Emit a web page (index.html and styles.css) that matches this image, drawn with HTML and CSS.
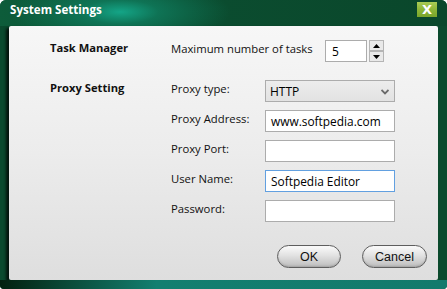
FILE: index.html
```html
<!DOCTYPE html>
<html>
<head>
<meta charset="utf-8">
<link rel="stylesheet" href="styles.css">
</head>
<body>
<div class="window">
  <div class="titlebar">
    <span class="title">System Settings</span>
    <span class="close">X</span>
  </div>
  <div class="panel">
    <div class="section">
      <div class="sec-label">Task Manager</div>
      <div class="sec-body">
        <div class="row">
          <span class="lbl wide">Maximum number of tasks</span>
          <div class="spin-input">5</div>
          <div class="spin-btns">
            <div class="spin-btn"><svg width="7" height="4" viewBox="0 0 7 4"><path d="M0 4 L3.5 0 L7 4 Z" fill="#000"/></svg></div>
            <div class="spin-btn"><svg width="7" height="4" viewBox="0 0 7 4"><path d="M0 0 L3.5 4 L7 0 Z" fill="#000"/></svg></div>
          </div>
        </div>
      </div>
    </div>
    <div class="section proxy">
      <div class="sec-label">Proxy Setting</div>
      <div class="sec-body">
        <div class="row">
          <span class="lbl">Proxy type:</span>
          <div class="select"><span>HTTP</span>
            <svg class="chev" width="8" height="6" viewBox="0 0 8 6"><path d="M0.5 1 L4 4.5 L7.5 1" fill="none" stroke="#6b6b6b" stroke-width="1.8"/></svg>
          </div>
        </div>
        <div class="row">
          <span class="lbl">Proxy Address:</span>
          <div class="input">www.softpedia.com</div>
        </div>
        <div class="row">
          <span class="lbl">Proxy Port:</span>
          <div class="input"></div>
        </div>
        <div class="row">
          <span class="lbl">User Name:</span>
          <div class="input focus">Softpedia Editor</div>
        </div>
        <div class="row">
          <span class="lbl">Password:</span>
          <div class="input"></div>
        </div>
      </div>
    </div>
    <div class="buttons">
      <button class="btn ok">OK</button>
      <button class="btn cancel">Cancel</button>
    </div>
  </div>
  <div class="bottom"></div>
</div>
</body>
</html>
```
FILE: styles.css
```css
html, body {
  margin: 0;
  padding: 0;
  background: #ffffff;
}
.window {
  width: 447px;
  height: 289px;
  display: flex;
  flex-direction: column;
  background: linear-gradient(90deg, #0a4a2e 0%, #0c4a2d 50%, #0b4a2d 100%);
  border-radius: 6px 6px 4px 4px;
  overflow: hidden;
  font-family: "Open Sans", "Noto Sans", sans-serif;
}
.titlebar {
  height: 26px;
  flex: none;
  display: flex;
  align-items: flex-start;
  justify-content: space-between;
  background:
    radial-gradient(ellipse 110px 34px at 120px 12px, rgba(20, 165, 135, 1) 0%, rgba(16, 130, 100, 0.7) 35%, rgba(11, 74, 45, 0) 100%),
    linear-gradient(90deg, #0d5c3a 0%, #0b4d30 40%, #0a472b 100%);
}
.title {
  color: #ffffff;
  font-weight: 700;
  font-size: 11.6px;
  line-height: 16px;
  padding: 2px 0 0 10px;
}
.close {
  margin: 2px 10px 0 0;
  width: 20px;
  height: 15px;
  box-sizing: border-box;
  background: linear-gradient(180deg, #a9cc55 0%, #8db638 50%, #7aa52a 100%);
  color: #ffffff;
  font-weight: 700;
  font-size: 13px;
  line-height: 15px;
  text-align: center;
  font-family: "DejaVu Sans", sans-serif;
}
.panel {
  flex: none;
  height: 254px;
  margin: 0 9px;
  box-sizing: border-box;
  padding: 14px 11px 0 41px;
  background: linear-gradient(180deg, #f7f7f7 0%, #ececec 50%, #dedede 100%);
  border-radius: 2px;
  box-shadow: -3px 2px 3px rgba(0, 0, 0, 0.75);
  display: flex;
  flex-direction: column;
  font-size: 11.3px;
  color: #000;
}
.section {
  display: flex;
}
.section.proxy {
  margin-top: 18px;
}
.sec-label {
  width: 121px;
  flex: none;
  font-weight: 700;
  font-size: 11.2px;
  line-height: 16px;
  padding-top: 0px;
  color: #111;
}
.sec-body {
  display: flex;
  flex-direction: column;
  gap: 8px;
}
.row {
  display: flex;
  align-items: flex-start;
  height: 22px;
}
.lbl {
  width: 94px;
  flex: none;
  line-height: 16px;
  padding-top: 1px;
  color: #111;
}
.lbl.wide {
  width: 154px;
}
.spin-input {
  width: 42px;
  height: 22px;
  box-sizing: border-box;
  border: 1px solid #acacac;
  background: #fff;
  padding: 3px 0 0 6px;
  line-height: 16px;
  font-size: 12px;
}
.spin-btns {
  margin-left: 2px;
  width: 15px;
  height: 22px;
  display: flex;
  flex-direction: column;
}
.spin-btn {
  flex: 1;
  box-sizing: border-box;
  border: 1px solid #b5b5b5;
  background: #e9e9e9;
  display: flex;
  align-items: center;
  justify-content: center;
}
.select {
  width: 130px;
  height: 22px;
  box-sizing: border-box;
  border: 1px solid #acacac;
  background: linear-gradient(180deg, #ececec 0%, #e2e2e2 100%);
  display: flex;
  align-items: center;
  justify-content: space-between;
  padding: 1px 4px 0 4px;
  font-size: 12px;
}
.chev {
  margin-right: 1px;
}
.input {
  width: 130px;
  height: 22px;
  box-sizing: border-box;
  border: 1px solid #acacac;
  background: #fff;
  padding: 2px 0 0 5px;
  line-height: 16px;
  font-size: 11.9px;
}
.input.focus {
  border-color: #62a0e0;
}
.buttons {
  margin-top: 23px;
  display: flex;
  justify-content: flex-end;
  gap: 21px;
}
.btn {
  height: 23px;
  border: 1px solid #5e5e5e;
  border-radius: 12px;
  background: linear-gradient(180deg, #fbfbfb 0%, #e2e2e2 45%, #bdbdbd 100%);
  font-family: "Liberation Sans", Arial, sans-serif;
  font-size: 12.5px;
  color: #111;
  padding: 0;
  box-shadow: inset 0 -1px 2px rgba(0,0,0,0.15);
}
.btn.ok { width: 64px; }
.btn.cancel { width: 65px; }
.bottom {
  flex: none;
  height: 9px;
  background: linear-gradient(90deg, #03200f 0%, #0a4a38 15%, #137f70 35%, #127a6c 100%);
}
```
